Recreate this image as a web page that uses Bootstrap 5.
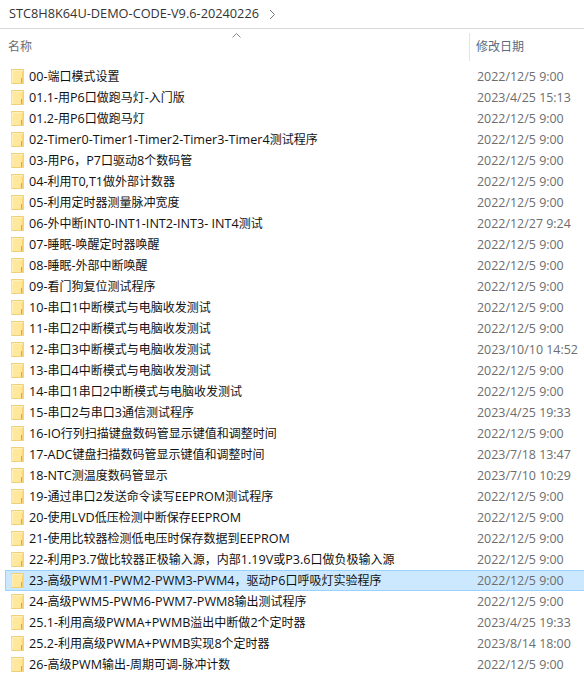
<!DOCTYPE html>
<html lang="zh">
<head>
<meta charset="utf-8">
<link href="https://cdn.jsdelivr.net/npm/bootstrap@5.3.0/dist/css/bootstrap.min.css" rel="stylesheet">
<style>
html,body{background:#fff;overflow:hidden;height:675px}
body{font-family:"Open Sans","Noto Sans CJK SC",sans-serif;font-size:12px;color:#111}
.crumbbar{height:29px;padding-left:9px;border-bottom:1px solid #d9d9d9;font-size:12.75px;color:#333;align-items:center}
.crumbbar svg{margin-left:10px}
.headbar{height:37px;position:relative}
.headname{padding-left:8px;color:#6d6d6d;flex:0 0 469px;height:28px;margin-top:4px;line-height:27px}
.headdate{border-left:1px solid #e4e4e4;padding-left:6px;height:28px;margin-top:4px;line-height:27px;color:#5a6a80}
.sortup{position:absolute;left:232px;top:4px}
.filerow{height:21px;margin-left:5px;border:1px solid transparent;border-right:0;line-height:19px}
.filerow.picked{background:#cce8ff;border-color:#99d1ff}
.fname{flex:0 0 464px;white-space:nowrap;overflow:hidden}
.fname svg{margin:0 4px 0 5px;flex:none}
.fdate{padding-left:7px;color:#6d6d6d;white-space:nowrap;font-size:12.45px}
.latinrun{font-size:12.6px}
</style>
</head>
<body>
<div class="d-flex crumbbar">STC8H8K64U-DEMO-CODE-V9.6-20240226<svg width="7" height="11" viewBox="0 0 7 11"><path d="M1 1l4.500 4.500L1 10" fill="none" stroke="#777" stroke-width="1"/></svg></div>
<div class="d-flex headbar">
<svg class="sortup" width="9" height="5" viewBox="0 0 9 5"><path d="M.5 4.500l4-4 4 4" fill="none" stroke="#8a8a8a"/></svg>
<div class="headname">名称</div><div class="headdate">修改日期</div>
</div>
<svg width="0" height="0" class="d-block"><defs><g id="fld"><path d="M.5.5H12.500V14.500H.5z" fill="#ffe79c" stroke="#efcf78"/><path d="M11 3h2v11h-2z" fill="#f9d272"/><path d="M1 1h10v1H1z" fill="#fff0bd"/><path d="M1 2v12" stroke="#fff3c9"/><path d="M10.500 9v5" stroke="#d8a83f"/></g></defs></svg>
<div id="rows"></div>
<script>
const d=[["00-端口模式设置","2022/12/5 9:00"],["01.1-用P6口做跑马灯-入门版","2023/4/25 15:13"],["01.2-用P6口做跑马灯","2022/12/5 9:00"],["02-Timer0-Timer1-Timer2-Timer3-Timer4测试程序","2022/12/5 9:00"],["03-用P6，P7口驱动8个数码管","2022/12/5 9:00"],["04-利用T0,T1做外部计数器","2022/12/5 9:00"],["05-利用定时器测量脉冲宽度","2022/12/5 9:00"],["06-外中断INT0-INT1-INT2-INT3- INT4测试","2022/12/27 9:24"],["07-睡眠-唤醒定时器唤醒","2022/12/5 9:00"],["08-睡眠-外部中断唤醒","2022/12/5 9:00"],["09-看门狗复位测试程序","2022/12/5 9:00"],["10-串口1中断模式与电脑收发测试","2022/12/5 9:00"],["11-串口2中断模式与电脑收发测试","2022/12/5 9:00"],["12-串口3中断模式与电脑收发测试","2023/10/10 14:52"],["13-串口4中断模式与电脑收发测试","2022/12/5 9:00"],["14-串口1串口2中断模式与电脑收发测试","2022/12/5 9:00"],["15-串口2与串口3通信测试程序","2023/4/25 19:33"],["16-IO行列扫描键盘数码管显示键值和调整时间","2022/12/5 9:00"],["17-ADC键盘扫描数码管显示键值和调整时间","2023/7/18 13:47"],["18-NTC测温度数码管显示","2023/7/10 10:29"],["19-通过串口2发送命令读写EEPROM测试程序","2022/12/5 9:00"],["20-使用LVD低压检测中断保存EEPROM","2022/12/5 9:00"],["21-使用比较器检测低电压时保存数据到EEPROM","2022/12/5 9:00"],["22-利用P3.7做比较器正极输入源，内部1.19V或P3.6口做负极输入源","2022/12/5 9:00"],["23-高级PWM1-PWM2-PWM3-PWM4，驱动P6口呼吸灯实验程序","2022/12/5 9:00"],["24-高级PWM5-PWM6-PWM7-PWM8输出测试程序","2022/12/5 9:00"],["25.1-利用高级PWMA+PWMB溢出中断做2个定时器","2023/4/25 19:33"],["25.2-利用高级PWMA+PWMB实现8个定时器","2023/8/14 18:00"],["26-高级PWM输出-周期可调-脉冲计数","2022/12/5 9:00"]];
const lat=s=>s.replace(/[\x20-\x7e]+/g,m=>`<span class="latinrun">${m}</span>`);
document.getElementById('rows').innerHTML=d.map((r,i)=>`<div class="d-flex align-items-center filerow${i==24?' picked':''}"><div class="d-flex align-items-center fname"><svg width="14" height="15" viewBox="0 0 14 15"><use href="#fld"/></svg><span>${lat(r[0])}</span></div><div class="fdate">${r[1]}</div></div>`).join('');
</script>
<script src="https://cdn.jsdelivr.net/npm/bootstrap@5.3.0/dist/js/bootstrap.bundle.min.js"></script>
</body>
</html>
